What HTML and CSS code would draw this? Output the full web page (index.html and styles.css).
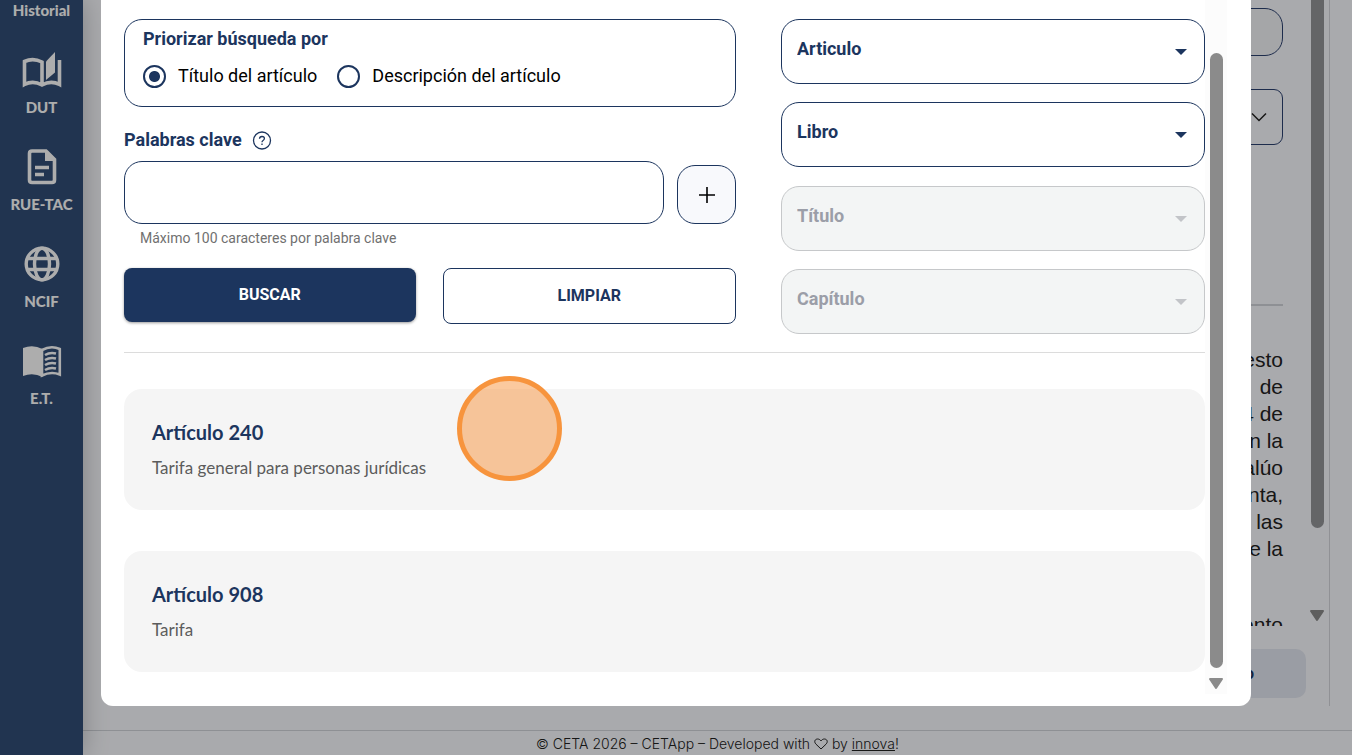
FILE: index.html
```html
<!DOCTYPE html>
<html lang="es">
<head>
    <meta charset="UTF-8">
    <meta name="viewport" content="width=device-width, initial-scale=1.0">
    <title>CETApp</title>
    <link rel="stylesheet" href="styles.css">
</head>
<body>
    <nav class="sidebar">
        <a href="#">Historial</a>
        <a href="#">
            <svg viewBox="0 0 40 40" fill="none" stroke="currentColor" stroke-width="3.600">
                <path d="M20 35V12Q11 7.500 2.500 11.500V34.500Q11 30 20 35Q29 30 37.500 34.500V10"/>
                <path d="M24 11.500L33 2V22.500L24 30Z" fill="currentColor" stroke="none"/>
            </svg>
            <span>DUT</span>
        </a>
        <a href="#">
            <svg viewBox="0 0 40 40" fill="none" stroke="currentColor" stroke-width="3.600">
                <path d="M10 4H24L32.500 12.500V33Q32.500 35.500 30 35.500H10Q7.500 35.500 7.500 33V6.500Q7.500 4 10 4Z"/>
                <path d="M23 4V14H33Z" fill="currentColor" stroke="none"/>
                <path d="M13 20.500H27M13 27.500H22"/>
            </svg>
            <span>RUE-TAC</span>
        </a>
        <a href="#">
            <svg viewBox="0 0 40 40" fill="none" stroke="currentColor" stroke-width="3.400">
                <circle cx="20" cy="20" r="15.800"/>
                <ellipse cx="20" cy="20" rx="7.500" ry="15.800"/>
                <path d="M5 14.500H35M5 25.500H35"/>
            </svg>
            <span>NCIF</span>
        </a>
        <a href="#">
            <svg viewBox="0 0 40 40" fill="none" stroke="currentColor" stroke-width="2.600">
                <path d="M20.500 8Q11 3 1 7V35Q11 31 20.500 36Z" fill="currentColor" stroke="none"/>
                <path d="M20 9Q29 4 37.800 8V33.500Q29 30 20 34.500Z"/>
                <path d="M23 14Q28 11 34 12.500M23 19Q28 16 34 17.500M23 24Q28 21 34 22.500M23 29Q28 26 34 27.500"/>
            </svg>
            <span>E.T.</span>
        </a>
    </nav>

    <div class="page">
        <main class="panel">
            <div class="reader">
                <div class="document">
                    <input class="doc-input" type="text" aria-label="Documento">
                    <button class="doc-select" aria-label="Abrir lista">
                        <svg viewBox="0 0 16 16" width="16" height="16" fill="none" stroke="currentColor" stroke-width="1.500">
                            <path d="M1 4.500L8 11.500L15 4.500"/>
                        </svg>
                    </button>
                    <hr>
                    <p>impuesto<br>de<br>4 de<br>en la<br>avalúo<br>venta,<br>las<br>de la</p>
                    <p>aumento</p>
                </div>
                <div class="scrollbar">
                    <div class="thumb"></div>
                    <svg class="arrow" viewBox="0 0 16 12"><path d="M2 1H14L8 10Z"/></svg>
                </div>
            </div>
            <button class="doc-button">Artículo</button>
        </main>
        <footer>© CETA 2026 – CETApp – Developed with
            <svg viewBox="0 0 14 12" width="14" height="12" fill="none" stroke="currentColor">
                <path d="M7 11L2 6.200C-0.500 3.500 1.200 1 3.600 1C5.200 1 6.300 1.900 7 3C7.700 1.900 8.800 1 10.400 1C12.800 1 14.500 3.500 12 6.200Z"/>
            </svg>
            by <a href="#">innova</a>!</footer>
    </div>

    <div class="backdrop">
        <div class="modal" role="dialog" aria-label="Buscar artículo">
            <div class="content">
                <form class="filters">
                    <div class="keywords">
                        <div class="priority" role="radiogroup" aria-labelledby="priorityTitle">
                            <h2 id="priorityTitle">Priorizar búsqueda por</h2>
                            <div class="options">
                                <input type="radio" name="priority" id="byTitle" checked>
                                <label for="byTitle">Título del artículo</label>
                                <input type="radio" name="priority" id="byDescription">
                                <label for="byDescription">Descripción del artículo</label>
                            </div>
                        </div>
                        <div class="field-title">
                            <label for="keyword">Palabras clave</label>
                            <svg viewBox="0 0 20 20" width="20" height="20" fill="none" stroke="currentColor" stroke-width="1.300">
                                <circle cx="10" cy="10.500" r="8.500"/>
                                <path d="M7.500 8.800Q7.600 6.500 10 6.500Q12.400 6.500 12.400 8.600Q12.400 9.700 11.100 10.500Q10 11.200 10 12.300M10 13.500V14.900"/>
                            </svg>
                        </div>
                        <div class="keyword-row">
                            <input type="text" id="keyword" maxlength="100">
                            <button type="button" class="add" aria-label="Agregar">
                                <svg viewBox="0 0 16 16" width="16" height="16" stroke="currentColor" stroke-width="1.600"><path d="M0 8H16M8 0V16"/></svg>
                            </button>
                        </div>
                        <p class="hint">Máximo 100 caracteres por palabra clave</p>
                        <div class="actions">
                            <button type="button" class="search">BUSCAR</button>
                            <button type="button" class="clear">LIMPIAR</button>
                        </div>
                    </div>
                    <div class="selects">
                        <div class="select-box">
                            <select aria-label="Articulo"><option>Articulo</option></select>
                            <svg viewBox="0 0 12 6"><path d="M0 0H12L6 6Z"/></svg>
                        </div>
                        <div class="select-box">
                            <select aria-label="Libro"><option>Libro</option></select>
                            <svg viewBox="0 0 12 6"><path d="M0 0H12L6 6Z"/></svg>
                        </div>
                        <div class="select-box disabled">
                            <select aria-label="Título" disabled><option>Título</option></select>
                            <svg viewBox="0 0 12 6"><path d="M0 0H12L6 6Z"/></svg>
                        </div>
                        <div class="select-box disabled">
                            <select aria-label="Capítulo" disabled><option>Capítulo</option></select>
                            <svg viewBox="0 0 12 6"><path d="M0 0H12L6 6Z"/></svg>
                        </div>
                    </div>
                </form>
                <div class="results">
                    <article class="result">
                        <h3>Artículo 240</h3>
                        <p>Tarifa general para personas jurídicas</p>
                        <span class="click-mark"></span>
                    </article>
                    <article class="result">
                        <h3>Artículo 908</h3>
                        <p>Tarifa</p>
                    </article>
                </div>
            </div>
            <div class="scrollbar">
                <div class="thumb"></div>
                <svg class="arrow" viewBox="0 0 16 12"><path d="M2 1H14L8 10Z"/></svg>
            </div>
        </div>
    </div>
</body>
</html>
```

FILE: styles.css
```css
* {
    box-sizing: border-box;
}
body {
    margin: 0;
    height: 100vh;
    display: flex;
    overflow: hidden;
    background-color: #fafbff;
    font-family: Roboto, sans-serif;
}
h2, h3, p {
    margin: 0;
}
button, input, select {
    font-family: inherit;
}

/* Sidebar */
.sidebar {
    width: 83px;
    flex-shrink: 0;
    display: flex;
    flex-direction: column;
    gap: 30px;
    background-color: #314d76;
    box-shadow: 0 0 24px rgba(0, 0, 0, 0.25);
    z-index: 1;
}
.sidebar a {
    display: flex;
    flex-direction: column;
    align-items: center;
    gap: 7px;
    color: white;
    text-decoration: none;
    font-family: Lato, sans-serif;
    font-size: 15px;
    font-weight: 900;
    line-height: 20px;
}
.sidebar svg {
    width: 40px;
    height: 40px;
}

/* Page behind the dialog */
.page {
    flex: 1;
    display: flex;
    flex-direction: column;
}
.panel {
    flex: 1;
    min-height: 0;
    margin-right: 22px;
    padding-bottom: 8px;
    display: flex;
    flex-direction: column;
    border-right: 1px solid #d4d6dc;
}
.reader {
    flex: 1;
    min-height: 0;
    display: flex;
    overflow: hidden;
}
.document {
    flex: 1;
    padding: 8px 22px 0 40px;
    font-family: "Liberation Sans", Arial, sans-serif;
    font-size: 21px;
    line-height: 27px;
    text-align: right;
    color: #222;
}
.document p {
    margin-bottom: 49px;
}
.document hr {
    margin: 159px 0 40px;
    border: none;
    border-top: 2px solid #d1d4da;
}
.doc-input {
    display: block;
    width: 100%;
    height: 48px;
    margin-bottom: 33px;
    border: 1px solid #2c4170;
    border-radius: 18px;
    background-color: #f3f5f8;
}
.doc-select {
    display: flex;
    align-items: center;
    justify-content: flex-end;
    width: 100%;
    height: 56px;
    padding: 0 15px;
    border: 1px solid #2c4170;
    border-radius: 9px;
    background: none;
    color: #222;
}
.doc-button {
    align-self: flex-end;
    height: 49px;
    margin: 23px 23px 0 0;
    padding: 0 52px;
    border: none;
    border-radius: 10px;
    background-color: #e4e8f2;
    color: #1c355e;
    font-size: 16px;
    font-weight: bold;
}
footer {
    height: 25px;
    margin-top: 24px;
    border-top: 1px solid #d1d4da;
    font-family: Inter, sans-serif;
    font-size: 14px;
    font-weight: 300;
    line-height: 26px;
    text-align: center;
    color: #222;
}
footer a {
    color: inherit;
}
footer svg {
    vertical-align: -1px;
}

/* Scrollbars */
.scrollbar {
    width: 22px;
    display: flex;
    flex-direction: column;
    align-items: center;
}
.thumb {
    width: 13px;
    border-radius: 7px;
    background-color: #8b8b8b;
}
.arrow {
    width: 16px;
    height: 12px;
    fill: #8b8b8b;
    stroke: #8b8b8b;
    stroke-width: 2;
    stroke-linejoin: round;
}
.reader .scrollbar {
    width: 24px;
}
.reader .thumb {
    height: 528px;
    margin-bottom: 82px;
    border-radius: 0 0 7px 7px;
    background-color: #949599;
}
.reader .arrow {
    flex-shrink: 0;
}

/* Dialog */
.backdrop {
    position: fixed;
    inset: 0;
    z-index: 2;
    display: flex;
    padding: 0 101px 49px;
    background-color: rgba(0, 0, 0, 0.32);
}
.modal {
    flex: 1;
    display: flex;
    padding: 0 24px 12px 23px;
    border-radius: 0 0 12px 12px;
    background-color: white;
}
.content {
    flex: 1;
    padding-top: 19px;
}
.modal .scrollbar {
    padding-top: 53px;
    background-color: #fcfcfc;
}
.modal .thumb {
    flex: 1;
    margin-bottom: 10px;
}
.modal .arrow {
    margin-bottom: 4px;
}

/* Search form */
.filters {
    display: grid;
    grid-template-columns: 612fr 424fr;
    gap: 45px;
    padding-bottom: 18px;
    border-bottom: 1px solid #dcdcdc;
    color: #1c355e;
}
.keywords {
    padding-bottom: 10px;
}
.priority {
    height: 88px;
    padding: 8px 18px;
    border: 1px solid #1c355e;
    border-radius: 18px;
}
.priority h2, .field-title {
    font-size: 18px;
    font-weight: bold;
    line-height: 22px;
}
.options {
    display: flex;
    align-items: center;
    margin-top: 14px;
    font-size: 18px;
    line-height: 24px;
    color: black;
}
.options input {
    appearance: none;
    width: 23px;
    height: 23px;
    margin: 0 12px 0 0;
    border: 2px solid #1c355e;
    border-radius: 50%;
}
.options input:checked {
    background: radial-gradient(circle, #1c355e 5px, transparent 6px);
}
.options label {
    margin-right: 20px;
}
.field-title {
    display: flex;
    align-items: center;
    gap: 10px;
    margin: 22px 0 10px;
}
.keyword-row {
    display: flex;
    align-items: flex-end;
    gap: 13px;
}
.keyword-row input {
    flex: 1;
    height: 63px;
    padding: 0 16px;
    border: 1px solid #1c355e;
    border-radius: 18px;
    font-size: 18px;
}
.add {
    width: 59px;
    height: 59px;
    display: flex;
    align-items: center;
    justify-content: center;
    border: 1px solid #1c355e;
    border-radius: 18px;
    background-color: #f8f9fc;
    color: black;
}
.hint {
    margin: 4px 16px 20px;
    font-size: 14px;
    line-height: 20px;
    color: #707070;
}
.actions {
    display: flex;
    align-items: flex-start;
    gap: 27px;
}
.actions button {
    flex: 1;
    height: 54px;
    padding: 0 0 2px;
    border: none;
    border-radius: 8px;
    font-size: 16px;
    font-weight: bold;
}
.actions .search {
    background-color: #1c355e;
    color: white;
    box-shadow: 0 1px 3px rgba(0, 0, 0, 0.4);
}
.actions .clear {
    height: 56px;
    border: 1px solid #1c355e;
    background-color: white;
    color: #1c355e;
}
.selects {
    display: flex;
    flex-direction: column;
    justify-content: space-between;
}
.select-box {
    position: relative;
}
.select-box select {
    display: block;
    appearance: none;
    width: 100%;
    height: 65px;
    padding: 0 40px 6px 15px;
    border: 1px solid #1c355e;
    border-radius: 18px;
    background-color: white;
    color: #1c355e;
    font-size: 18px;
    font-weight: bold;
    opacity: 1;
}
.select-box svg {
    position: absolute;
    top: 30px;
    right: 18px;
    width: 12px;
    height: 6px;
    fill: #1c355e;
}
.disabled select {
    border-color: #c6c8ca;
    background-color: #f3f5f5;
    color: #9b9ea8;
}
.disabled svg {
    fill: #c2c4c8;
}

/* Results */
.results {
    display: flex;
    flex-direction: column;
    gap: 41px;
    padding-top: 36px;
}
.result {
    position: relative;
    height: 121px;
    padding: 30px 28px;
    border-radius: 18px;
    background-color: #f5f5f5;
    font-family: Lato, sans-serif;
}
.result h3 {
    margin-bottom: 10px;
    font-size: 20px;
    line-height: 26px;
    color: #1c355e;
}
.result p {
    font-size: 17px;
    line-height: 26px;
    color: #5c5c5c;
}
.click-mark {
    position: absolute;
    top: -13px;
    left: 333px;
    width: 105px;
    height: 105px;
    border: 5px solid #f7943d;
    border-radius: 50%;
    background-color: rgba(247, 148, 61, 0.5);
}
```
